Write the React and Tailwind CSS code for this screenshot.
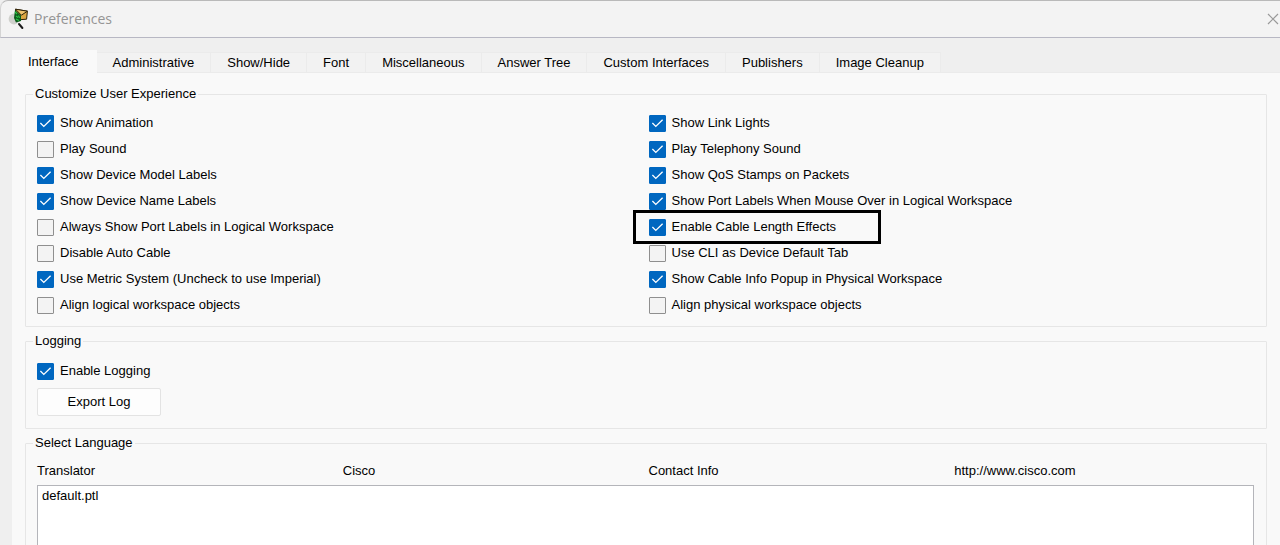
import React, { useState } from "react";

const tabs = [
  "Interface",
  "Administrative",
  "Show/Hide",
  "Font",
  "Miscellaneous",
  "Answer Tree",
  "Custom Interfaces",
  "Publishers",
  "Image Cleanup",
];

const options = [
  ["Show Animation", true],
  ["Show Link Lights", true],
  ["Play Sound", false],
  ["Play Telephony Sound", true],
  ["Show Device Model Labels", true],
  ["Show QoS Stamps on Packets", true],
  ["Show Device Name Labels", true],
  ["Show Port Labels When Mouse Over in Logical Workspace", true],
  ["Always Show Port Labels in Logical Workspace", false],
  ["Enable Cable Length Effects", true, true],
  ["Disable Auto Cable", false],
  ["Use CLI as Device Default Tab", false],
  ["Use Metric System (Uncheck to use Imperial)", true],
  ["Show Cable Info Popup in Physical Workspace", true],
  ["Align logical workspace objects", false],
  ["Align physical workspace objects", false],
];

function AppIcon() {
  return (
    <svg viewBox="0 0 20 22" className="h-[22px] w-5" aria-hidden="true">
      <circle cx="6" cy="11" r="5.4" fill="#cfd0cc" />
      <path d="M7.5 1.2 L19.4 3.2 L18.6 11.2 L8 12 Z" fill="#dca640" stroke="#2e2208" strokeWidth="1" />
      <path d="M7.5 1.2 L13.4 7.2 L19.4 3.2 Z" fill="#f0c46c" stroke="#2e2208" strokeWidth="1" />
      <path d="M7 2 L13 7.5 L13 13 L8 14.5 L6 10 Z" fill="#0d5c1c" />
      <path d="M7 4 L9 6 M8 8 L10 9.5 M10.5 7.5 L11.5 10 M8 11 L11 12.5" stroke="#2ec746" strokeWidth="1.1" />
      <path d="M11 16 L14.4 20" stroke="#1c1c1c" strokeWidth="2" strokeLinecap="round" />
    </svg>
  );
}

function Check({ label, checked, highlighted }) {
  const [on, setOn] = useState(checked);
  return (
    <label className="relative flex h-[26px] w-fit items-center gap-1.5 whitespace-nowrap">
      <span className="grid h-[17px] w-[17px] shrink-0">
        <input
          type="checkbox"
          checked={on}
          onChange={() => setOn(!on)}
          className="peer col-start-1 row-start-1 h-full w-full appearance-none rounded-[1px] border border-[#8f8f8f] bg-[#f3f3f3] checked:border-[#0067c0] checked:bg-[#0067c0]"
        />
        <svg
          viewBox="0 0 17 17"
          fill="none"
          className="pointer-events-none invisible col-start-1 row-start-1 h-full w-full peer-checked:visible"
          aria-hidden="true"
        >
          <path d="M3.4 8 L6.8 11.4 L13.6 4.8" stroke="#fff" strokeWidth="1.3" />
        </svg>
      </span>
      <span>{label}</span>
      {highlighted && (
        <span className="pointer-events-none absolute -top-1 -left-4 h-[34px] w-[248px] border-[3px] border-black" />
      )}
    </label>
  );
}

function Group({ title, children }) {
  return (
    <fieldset className="min-w-0 rounded-[1px] border border-[#e6e6e6] pr-3 pb-2 pl-[11px]">
      <legend className="-ml-1 px-0.5 leading-5">{title}</legend>
      {children}
    </fieldset>
  );
}

export default function App() {
  const [active, setActive] = useState("Interface");
  return (
    <div className="flex h-screen flex-col overflow-hidden bg-[#efefef] font-['Liberation_Sans',Arial,sans-serif] text-[13px] leading-5 text-black">
      <header className="flex h-[38px] shrink-0 items-center justify-between rounded-tl-lg border-t border-l border-b border-t-[#b9b9b9] border-l-[#d4d4d4] border-b-[#b7b7c3] bg-[#f3f3f3] pl-[7px]">
        <div className="flex items-center gap-1.5">
          <AppIcon />
          <h1 className="font-['Open_Sans','Noto_Sans',sans-serif] text-[14px] text-[#959595]">Preferences</h1>
        </div>
        <button type="button" aria-label="Close" className="flex w-[14px] justify-center">
          <svg viewBox="0 0 12 12" className="h-3 w-3" aria-hidden="true">
            <path d="M1 1 L11 11 M11 1 L1 11" stroke="#999" strokeWidth="1.2" />
          </svg>
        </button>
      </header>

      <nav role="tablist" className="mt-3 ml-3 flex shrink-0 items-end">
        {tabs.map((t) => (
          <button
            key={t}
            type="button"
            role="tab"
            aria-selected={t === active}
            onClick={() => setActive(t)}
            className={
              t === active
                ? "h-[23px] bg-[#f9f9f9] pr-[18px] pl-4 whitespace-nowrap"
                : "h-[21px] border-t border-r border-b border-[#ebebeb] bg-[#f2f2f2] px-4 whitespace-nowrap"
            }
          >
            {t}
          </button>
        ))}
        <span className="h-px grow bg-[#ebebeb]" />
      </nav>

      <main className="ml-3 flex grow flex-col gap-1 bg-[#f9f9f9] pt-[11px] pr-[13px] pl-[13px]">
        <Group title="Customize User Experience">
          <div className="grid grid-cols-2 gap-x-1.5 pt-1.5">
            {options.map(([label, checked, highlighted]) => (
              <Check key={label} label={label} checked={checked} highlighted={highlighted} />
            ))}
          </div>
        </Group>

        <Group title="Logging">
          <div className="flex flex-col items-start gap-1 pt-[7px] pb-1">
            <Check label="Enable Logging" checked />
            <button type="button" className="h-7 w-[124px] rounded-[2px] border border-[#e3e3e3] bg-[#fdfdfd]">
              Export Log
            </button>
          </div>
        </Group>

        <Group title="Select Language">
          <div className="grid grid-cols-4 gap-x-1.5 pt-2 pb-1">
            <span>Translator</span>
            <span>Cisco</span>
            <span>Contact Info</span>
            <span>http://www.cisco.com</span>
          </div>
          <select
            size={8}
            aria-label="Language file"
            className="block h-40 w-full appearance-none overflow-hidden border border-[#b4b5ba] bg-white px-1 py-0.5"
          >
            <option>default.ptl</option>
          </select>
        </Group>
      </main>
    </div>
  );
}
